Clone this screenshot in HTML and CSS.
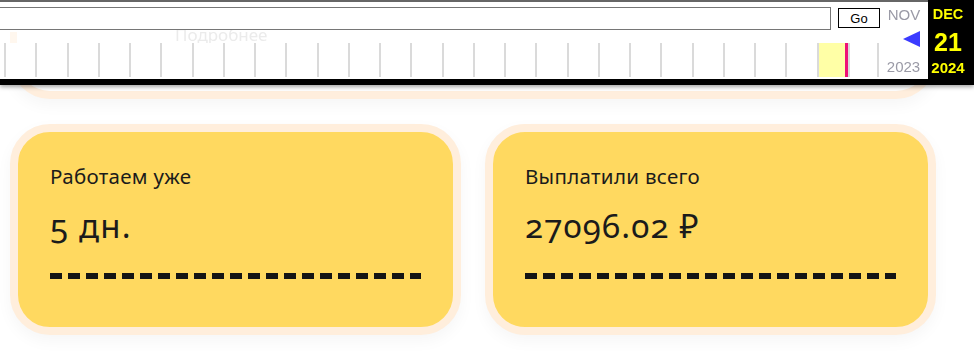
FILE: index.html
```html
<!DOCTYPE html>
<html lang="ru">
<head>
<meta charset="utf-8">
<title>Статистика</title>
<link rel="stylesheet" href="styles.css">
</head>
<body>
<div class="wb-toolbar">
  <div class="wb-main">
    <div class="wb-search">
      <input class="wb-url" type="text" value="">
      <button class="wb-go" type="button">Go</button>
    </div>
    <div class="wb-peek">
      <span class="peek-block"></span>
      <span class="peek-text">Подробнее</span>
    </div>
    <div class="wb-timeline">
      <span class="wb-month"></span><span class="wb-month"></span><span class="wb-month"></span><span class="wb-month"></span>
      <span class="wb-month"></span><span class="wb-month"></span><span class="wb-month"></span><span class="wb-month"></span>
      <span class="wb-month"></span><span class="wb-month"></span><span class="wb-month"></span><span class="wb-month"></span>
      <span class="wb-month"></span><span class="wb-month"></span><span class="wb-month"></span><span class="wb-month"></span>
      <span class="wb-month"></span><span class="wb-month"></span><span class="wb-month"></span><span class="wb-month"></span>
      <span class="wb-month"></span><span class="wb-month"></span><span class="wb-month"></span><span class="wb-month"></span>
      <span class="wb-month"></span><span class="wb-month"></span><span class="wb-month wb-current"></span><span class="wb-month wb-last"></span>
    </div>
  </div>
  <div class="wb-nav">
    <span class="wb-nav-month">NOV</span>
    <span class="wb-arrow"></span>
    <span class="wb-nav-year">2023</span>
  </div>
  <div class="wb-date">
    <span class="wb-date-month">DEC</span>
    <span class="wb-date-day">21</span>
    <span class="wb-date-year">2024</span>
  </div>
</div>

<main class="page">
  <section class="top-card"></section>
  <section class="stats">
    <div class="stat">
      <p class="stat-label">Работаем уже</p>
      <p class="stat-value">5 дн.</p>
      <div class="stat-dash"></div>
    </div>
    <div class="stat">
      <p class="stat-label">Выплатили всего</p>
      <p class="stat-value">27096.02 ₽</p>
      <div class="stat-dash"></div>
    </div>
  </section>
</main>
</body>
</html>
```

FILE: styles.css
```css
* { box-sizing: border-box; }

body {
  margin: 0;
  background: #ffffff;
  font-family: "Noto Sans", "Lato", sans-serif;
  color: #1b1b1b;
}

/* ---------- Wayback toolbar overlay ---------- */
.wb-toolbar {
  position: fixed;
  top: 0;
  left: 0;
  width: 974px;
  height: 85px;
  display: flex;
  background: #ffffff;
  border-bottom: 6px solid #000000;
  box-shadow: 0 2px 4px rgba(0, 0, 0, 0.35);
  font-family: "Liberation Sans", Arial, sans-serif;
  z-index: 10;
}

.wb-main {
  width: 880px;
  border-top: 2px solid #666666;
}

.wb-search {
  display: flex;
  align-items: flex-start;
  padding-top: 5px;
  height: 28px;
}

.wb-url {
  width: 833px;
  height: 23px;
  margin: 0 0 0 -2px;
  border: 1px solid #767676;
  background: #ffffff;
  padding: 0 4px;
}

.wb-go {
  width: 42px;
  height: 20px;
  margin: 1px 0 0 7px;
  padding: 0;
  border: 1px solid #000000;
  background: #ffffff;
  font-family: "Liberation Sans", Arial, sans-serif;
  font-size: 13px;
  color: #000000;
}

.wb-peek {
  height: 13px;
  overflow: hidden;
  display: flex;
  align-items: flex-start;
}

.peek-block {
  width: 7px;
  height: 11px;
  margin: 2px 0 0 10px;
  background: #fff7ee;
}

.peek-text {
  margin: -6px 0 0 158px;
  font-family: "Noto Sans", "Lato", sans-serif;
  font-size: 17px;
  line-height: 22px;
  color: #ebebeb;
}

.wb-timeline {
  display: flex;
  height: 34px;
  margin-bottom: 2px;
  padding-left: 4px;
}

.wb-month {
  width: 31.25px;
  flex: none;
  border-left: 2px solid #dadada;
}

.wb-current {
  background: #ffffa6;
  border-right: 3px solid #ee1177;
}

.wb-last {
  border-right: 2px solid #dadada;
}

.wb-nav {
  width: 48px;
  border-top: 2px solid #666666;
  display: flex;
  flex-direction: column;
  align-items: center;
  color: #9a9aa6;
  font-size: 15px;
  line-height: 17px;
}

.wb-nav-month {
  margin-top: 4px;
}

.wb-arrow {
  width: 0;
  height: 0;
  margin: 8px 0 0 14px;
  border-top: 8.5px solid transparent;
  border-bottom: 8.5px solid transparent;
  border-right: 17px solid #3b3bff;
}

.wb-nav-year {
  margin-top: 11px;
  margin-left: -1px;
}

.wb-date {
  width: 46px;
  background: #000000;
  color: #ffff00;
  font-weight: 700;
  display: flex;
  flex-direction: column;
  align-items: center;
  padding-right: 6px;
}

.wb-date-month {
  margin-top: 6px;
  font-size: 14.5px;
  line-height: 17px;
}

.wb-date-day {
  margin-top: 5px;
  font-size: 25px;
  line-height: 28px;
}

.wb-date-year {
  margin-top: 3px;
  font-size: 15px;
  line-height: 17px;
}

/* ---------- Page ---------- */
.page {
  padding: 0 38px 20px 10px;
}

.top-card {
  height: 99px;
  border: 8px solid #ffeedd;
  border-top: 0;
  border-radius: 0 0 40px 40px;
  background: #ffffff;
  box-shadow: 0 6px 16px rgba(0, 0, 0, 0.04);
}

.stats {
  display: grid;
  grid-template-columns: 1fr 1fr;
  gap: 24px;
  margin-top: 25px;
}

.stat {
  border: 8px solid #ffeedc;
  border-radius: 40px;
  background: #ffd960;
  padding: 32px 32px 48px;
  box-shadow: 0 6px 16px rgba(0, 0, 0, 0.04);
}

.stat-label {
  margin: 0;
  font-size: 20.5px;
  line-height: 24px;
  font-weight: 400;
  letter-spacing: 0.3px;
}

.stat-value {
  margin: 19px 0 0;
  font-size: 33px;
  line-height: 38px;
  font-weight: 400;
  letter-spacing: 1.2px;
  font-variant-numeric: oldstyle-nums;
}

.stat-dash {
  margin-top: 28px;
  height: 6px;
  background: repeating-linear-gradient(90deg, #141414 0 12px, transparent 12px 18px);
}
```
